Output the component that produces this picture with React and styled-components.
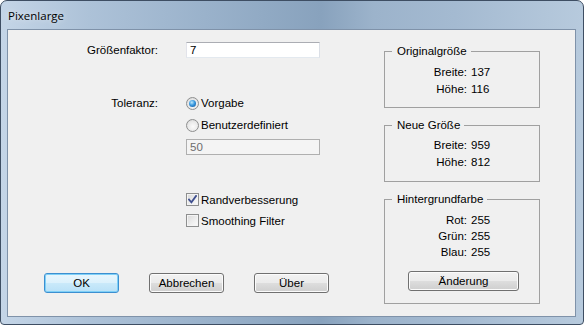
import React from 'react';
import styled, { createGlobalStyle, css } from 'styled-components';

const GlobalStyle = createGlobalStyle`
  html, body {
    margin: 0;
    padding: 0;
    background: #ffffff;
  }
  body {
    font-family: "Liberation Sans", Arial, sans-serif;
  }
`;

const Window = styled.div`
  width: 584px;
  height: 325px;
  box-sizing: border-box;
  border: 1px solid #3e4e63;
  border-radius: 7px 7px 4px 4px;
  background: linear-gradient(
    90deg,
    #c4d5e7 0%,
    #adc2d8 15%,
    #9ab2cb 35%,
    #88a2bd 55%,
    #9cb3cb 64%,
    #a4bad1 78%,
    #b7cadd 100%
  );
  display: flex;
  flex-direction: column;
  padding: 0 7px 7px 6px;
  overflow: hidden;
`;

const TitleBar = styled.div`
  height: 28px;
  display: flex;
  align-items: center;
  padding-left: 1px;
  font-family: "Open Sans", "Liberation Sans", sans-serif;
  font-size: 11.5px;
  color: #000;
  text-shadow: 0 0 6px rgba(255, 255, 255, 0.7);
`;

const Client = styled.div`
  flex: 1;
  display: flex;
  border: 1px solid #7f92a9;
  background: #f0f0f0;
  font-family: "Liberation Sans", Arial, sans-serif;
  font-size: 11.5px;
  color: #000;
`;

const LeftPane = styled.div`
  width: 376px;
  display: flex;
  flex-direction: column;
`;

const RightPane = styled.div`
  width: 156px;
  display: flex;
  flex-direction: column;
  padding-top: 15px;
`;

const FormGrid = styled.div`
  display: grid;
  grid-template-columns: 150px 134px;
  column-gap: 28px;
  align-items: start;
  margin-top: ${p => p.$top}px;
`;

const Label = styled.div`
  text-align: right;
  line-height: ${p => p.$lh}px;
`;

const Column = styled.div`
  display: flex;
  flex-direction: column;
`;

const TextBox = styled.div`
  height: 16px;
  box-sizing: border-box;
  border: 1px solid #abadb3;
  border-left-color: #e2e3ea;
  border-right-color: #dbdfe6;
  border-bottom-color: #e3e9ef;
  background: #ffffff;
  padding-left: 3px;
  line-height: 14px;
  margin-top: ${p => p.$top || 0}px;
  ${p => p.$disabled && css`
    background: #f4f4f4;
    border-color: #afafaf;
    color: #6d6d6d;
  `}
`;

const OptionRow = styled.div`
  height: ${p => p.$h}px;
  display: flex;
  align-items: center;
  gap: 2px;
`;

const Radio = styled.span`
  width: 13px;
  height: 13px;
  box-sizing: border-box;
  border-radius: 50%;
  border: 1px solid #8e8f8f;
  background: radial-gradient(circle at 55% 60%, #fbfbfb 0%, #e9e9e9 55%, #cbcbcb 100%);
  display: flex;
  align-items: center;
  justify-content: center;
  flex-shrink: 0;
`;

const RadioDot = styled.span`
  width: 7px;
  height: 7px;
  border-radius: 50%;
  background: radial-gradient(circle at 40% 35%, #bfe8fb 0%, #3a9ae0 45%, #0e4d92 100%);
`;

const CheckBox = styled.span`
  width: 13px;
  height: 13px;
  box-sizing: border-box;
  border: 1px solid #8e8f8f;
  background: linear-gradient(135deg, #d8d8d8 0%, #efefef 60%, #fbfbfb 100%);
  box-shadow: inset 0 0 0 1px #f4f4f4;
  display: flex;
  align-items: center;
  justify-content: center;
  flex-shrink: 0;
`;

const ButtonRow = styled.div`
  display: flex;
  gap: 30px;
  padding-left: 36px;
  margin-top: 42px;
`;

const Button = styled.div`
  width: ${p => p.$w || 75}px;
  height: 20px;
  box-sizing: border-box;
  border: 1px solid #707070;
  border-radius: 3px;
  background: linear-gradient(#f2f2f2 0%, #ebebeb 48%, #dddddd 52%, #cfcfcf 100%);
  box-shadow: inset 0 0 0 1px #fbfbfb;
  display: flex;
  align-items: center;
  justify-content: center;
  margin-left: ${p => p.$ml || 0}px;
  margin-top: ${p => p.$mt || 0}px;
  ${p => p.$default && css`
    border-color: #3c8fd0;
    background: linear-gradient(#e8f6fd 0%, #dcf1fc 48%, #c9e9fa 52%, #b9e1f7 100%);
    box-shadow: inset 0 0 0 1px #7fd0f7;
  `}
`;

const Group = styled.fieldset`
  margin: ${p => p.$gap || 0}px 0 0 0;
  padding: ${p => p.$pt}px 0 ${p => p.$pb}px 0;
  border: 1px solid #a0a0a0;
  min-width: 0;
`;

const Legend = styled.legend`
  margin-left: 7px;
  padding: 0 4px 0 5px;
  line-height: 13px;
`;

const ValueRow = styled.div`
  display: grid;
  grid-template-columns: 82px auto;
  column-gap: 4px;
  height: ${p => p.$h}px;
  align-items: center;
`;

const ValueLabel = styled.span`
  text-align: right;
`;

function Check() {
  return (
    <svg width="9" height="9" viewBox="0 0 9 9">
      <path d="M1 4.6 L3.4 7.3 L8 1" fill="none" stroke="#3f4f8f" strokeWidth="1.8" strokeLinecap="square" />
    </svg>
  );
}

function Values({ rows, h }) {
  return rows.map(([k, v]) => (
    <ValueRow key={k} $h={h}>
      <ValueLabel>{k}</ValueLabel>
      <span>{v}</span>
    </ValueRow>
  ));
}

export default function App() {
  return (
    <>
      <GlobalStyle />
      <Window>
        <TitleBar>Pixenlarge</TitleBar>
        <Client>
          <LeftPane>
            <FormGrid $top={12}>
              <Label $lh={16}>Größenfaktor:</Label>
              <TextBox>7</TextBox>
            </FormGrid>

            <FormGrid $top={34}>
              <Label $lh={22}>Toleranz:</Label>
              <Column>
                <OptionRow $h={22}>
                  <Radio><RadioDot /></Radio>
                  <span>Vorgabe</span>
                </OptionRow>
                <OptionRow $h={22}>
                  <Radio />
                  <span>Benutzerdefiniert</span>
                </OptionRow>
                <TextBox $top={3} $disabled>50</TextBox>
              </Column>
            </FormGrid>

            <FormGrid $top={34}>
              <span />
              <Column>
                <OptionRow $h={21}>
                  <CheckBox><Check /></CheckBox>
                  <span>Randverbesserung</span>
                </OptionRow>
                <OptionRow $h={21}>
                  <CheckBox />
                  <span>Smoothing Filter</span>
                </OptionRow>
              </Column>
            </FormGrid>

            <ButtonRow>
              <Button $default>OK</Button>
              <Button>Abbrechen</Button>
              <Button>Über</Button>
            </ButtonRow>
          </LeftPane>

          <RightPane>
            <Group $pt={5} $pb={10}>
              <Legend>Originalgröße</Legend>
              <Values h={17} rows={[['Breite:', '137'], ['Höhe:', '116']]} />
            </Group>
            <Group $gap={11} $pt={4} $pb={11}>
              <Legend>Neue Größe</Legend>
              <Values h={17} rows={[['Breite:', '959'], ['Höhe:', '812']]} />
            </Group>
            <Group $gap={11} $pt={6} $pb={12}>
              <Legend>Hintergrundfarbe</Legend>
              <Values h={16} rows={[['Rot:', '255'], ['Grün:', '255'], ['Blau:', '255']]} />
              <Button $w={111} $ml={23} $mt={11}>Änderung</Button>
            </Group>
          </RightPane>
        </Client>
      </Window>
    </>
  );
}
